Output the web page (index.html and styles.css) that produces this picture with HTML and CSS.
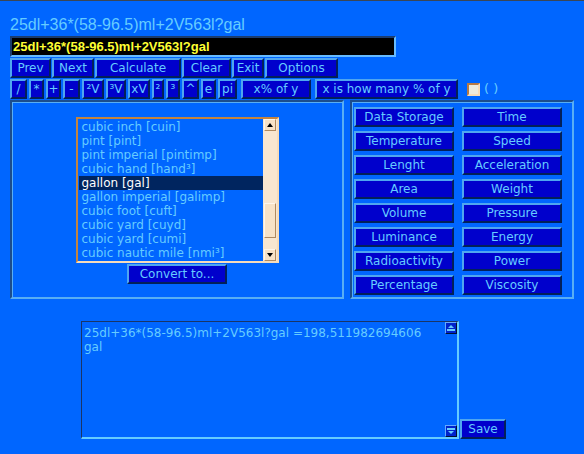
FILE: index.html
```html
<!DOCTYPE html>
<html lang="en">
<head>
  <meta charset="UTF-8">
  <title>Unit Calculator</title>
  <link rel="stylesheet" href="styles.css">
</head>
<body>
  <div class="app">
    <h1 class="title">25dl+36*(58-96.5)ml+2V563l?gal</h1>
    <input class="expr" type="text" value="25dl+36*(58-96.5)ml+2V563l?gal">

    <!-- main actions -->
    <div class="row row-main">
      <button class="btn b-prev">Prev</button>
      <button class="btn b-next">Next</button>
      <button class="btn b-calc">Calculate</button>
      <button class="btn b-clear">Clear</button>
      <button class="btn b-exit">Exit</button>
      <button class="btn b-options">Options</button>
    </div>

    <!-- operators -->
    <div class="row row-ops">
      <button class="btn k-div">/</button>
      <button class="btn k-mul">*</button>
      <button class="btn k-add">+</button>
      <button class="btn k-sub">-</button>
      <button class="btn k-sqrt">²V</button>
      <button class="btn k-cbrt">³V</button>
      <button class="btn k-xrt">xV</button>
      <button class="btn k-sq">²</button>
      <button class="btn k-cube">³</button>
      <button class="btn k-pow">^</button>
      <button class="btn k-e">e</button>
      <button class="btn k-pi">pi</button>
      <button class="btn k-pct">x% of y</button>
      <button class="btn k-howmany">x is how many % of y</button>
      <input class="check" type="checkbox">
      <span class="parens">( )</span>
    </div>

    <div class="panels">
      <!-- unit list -->
      <div class="panel panel-units">
        <div class="listbox">
          <ul class="items">
            <li>cubic inch [cuin]</li>
            <li>pint [pint]</li>
            <li>pint imperial [pintimp]</li>
            <li>cubic hand [hand³]</li>
            <li class="selected">gallon [gal]</li>
            <li>gallon imperial [galimp]</li>
            <li>cubic foot [cuft]</li>
            <li>cubic yard [cuyd]</li>
            <li>cubic yard [cumi]</li>
            <li>cubic nautic mile [nmi³]</li>
          </ul>
          <div class="scrollbar">
            <span class="sb-btn"><span class="tri-up"></span></span>
            <div class="sb-track"><span class="sb-thumb"></span></div>
            <span class="sb-btn"><span class="tri-down"></span></span>
          </div>
        </div>
        <button class="btn b-convert">Convert to...</button>
      </div>

      <!-- categories -->
      <div class="panel panel-cats">
        <button class="btn cat">Data Storage</button>
        <button class="btn cat">Time</button>
        <button class="btn cat">Temperature</button>
        <button class="btn cat">Speed</button>
        <button class="btn cat">Lenght</button>
        <button class="btn cat">Acceleration</button>
        <button class="btn cat">Area</button>
        <button class="btn cat">Weight</button>
        <button class="btn cat">Volume</button>
        <button class="btn cat">Pressure</button>
        <button class="btn cat">Luminance</button>
        <button class="btn cat">Energy</button>
        <button class="btn cat">Radioactivity</button>
        <button class="btn cat">Power</button>
        <button class="btn cat">Percentage</button>
        <button class="btn cat">Viscosity</button>
      </div>
    </div>

    <!-- result -->
    <div class="result-row">
      <div class="result">
        <div class="result-text">25dl+36*(58-96.5)ml+2V563l?gal =198,511982694606<br>gal</div>
        <div class="result-scroll">
          <span class="rs-btn">
            <svg width="8" height="6" viewBox="0 0 8 6"><path d="M1 3 L4 0 L7 3 Z" fill="#66ccff"/><rect x="0" y="4" width="8" height="2" fill="#66ccff"/></svg>
          </span>
          <span class="rs-btn">
            <svg width="8" height="6" viewBox="0 0 8 6"><rect x="0" y="0" width="8" height="2" fill="#66ccff"/><path d="M1 3 L4 6 L7 3 Z" fill="#66ccff"/></svg>
          </span>
        </div>
      </div>
      <button class="btn b-save">Save</button>
    </div>
  </div>
</body>
</html>
```

FILE: styles.css
```css
body {
  margin: 0;
  padding: 0;
  background-color: #0066ff;
  border-top: 1px solid #3a4656;
  font-family: "DejaVu Sans", Verdana, sans-serif;
  font-size: 12px;
  color: #66ccff;
}
.app {
  padding: 0 10px;
}
.title {
  margin: 15px 0 2px;
  height: 18px;
  font-family: "Liberation Sans", Arial, sans-serif;
  font-size: 16px;
  font-weight: normal;
  line-height: 18px;
  color: #66ccff;
}
.expr {
  display: block;
  box-sizing: border-box;
  width: 386px;
  height: 21px;
  margin: 0;
  padding: 0 0 0 1px;
  background: #000;
  border: 2px solid;
  border-color: #1b3c6e #66bbff #66bbff #1b3c6e;
  color: #ffff33;
  font-family: "Liberation Sans", Arial, sans-serif;
  font-size: 13px;
  font-weight: bold;
  outline: none;
}

/* buttons */
.btn {
  box-sizing: border-box;
  height: 20px;
  margin: 0;
  padding: 0;
  background: #0000cc;
  border: 2px solid;
  border-color: #4fa6f0 #02205a #02205a #4fa6f0;
  color: #66ccff;
  font-family: "DejaVu Sans", Verdana, sans-serif;
  font-size: 12px;
  line-height: 14px;
  text-align: center;
  white-space: nowrap;
  cursor: pointer;
}
.row {
  display: flex;
  align-items: center;
  gap: 1px;
  margin-top: 1px;
}
.b-prev { width: 41px; }
.b-next { width: 42px; }
.b-calc { width: 86px; }
.b-clear { width: 49px; }
.b-exit { width: 32px; }
.b-options { width: 73px; }

.row-ops {
  gap: 2px;
}
.k-div { width: 17px; }
.k-mul { width: 15px; }
.k-add { width: 15px; }
.k-sub { width: 17px; }
.k-sqrt { width: 22px; }
.k-cbrt { width: 20px; }
.k-xrt { width: 22px; }
.k-sq { width: 12px; }
.k-cube { width: 14px; }
.k-pow { width: 17px; }
.k-e { width: 15px; }
.k-pi { width: 19px; }
.k-pct { width: 70px; margin-left: 2px; }
.k-howmany { width: 143px; margin-left: 2px; }
.check {
  appearance: none;
  box-sizing: border-box;
  width: 13px;
  height: 13px;
  margin: 0 0 0 7px;
  background: #eeebdd;
  border: 2px solid;
  border-color: #b87a44 #f8dcb8 #f8dcb8 #b87a44;
}
.parens {
  margin-left: 2px;
  font-size: 13px;
  line-height: 14px;
}

/* panels */
.panels {
  display: flex;
  gap: 6px;
  margin-top: 1px;
}
.panel {
  box-sizing: border-box;
  height: 199px;
  border: 2px solid;
  border-color: #1c4d8c #58aef4 #58aef4 #1c4d8c;
  box-shadow: inset 1px 1px 0 #58aef4;
}
.panel-units {
  width: 334px;
  display: flex;
  flex-direction: column;
  align-items: center;
  padding-top: 15px;
}
.listbox {
  box-sizing: border-box;
  display: flex;
  width: 203px;
  height: 146px;
  border: 2px solid;
  border-color: #c4843f #f6dcbb #f6dcbb #c4843f;
}
.items {
  flex: 1;
  margin: 0;
  padding: 1px 0 0 1px;
  list-style: none;
  overflow: hidden;
}
.items li {
  height: 14px;
  padding-left: 3px;
  line-height: 14px;
  white-space: nowrap;
}
.items li.selected {
  background: #00255f;
  color: #fff;
}
.scrollbar {
  display: flex;
  flex-direction: column;
  width: 14px;
  background: #f8e6d0;
}
.sb-btn,
.sb-thumb {
  box-sizing: border-box;
  display: flex;
  align-items: center;
  justify-content: center;
  width: 12px;
  height: 12px;
  margin-left: 1px;
  background: #f8e2c6;
  border: 1px solid;
  border-color: #fff6ea #b08a60 #b08a60 #fff6ea;
}
.sb-track {
  flex: 1;
}
.sb-thumb {
  height: 35px;
  margin-top: 72px;
}
.tri-up,
.tri-down {
  width: 0;
  height: 0;
  border-left: 3px solid transparent;
  border-right: 3px solid transparent;
}
.tri-up { border-bottom: 4px solid #000; }
.tri-down { border-top: 4px solid #000; }
.b-convert {
  width: 100px;
  margin-top: 1px;
}

.panel-cats {
  width: 224px;
  display: grid;
  grid-template-columns: 100px 100px;
  grid-auto-rows: 20px;
  gap: 4px 8px;
  align-content: start;
  padding: 5px 0 0 2px;
}

/* result */
.result-row {
  display: flex;
  align-items: flex-end;
  margin: 22px 0 0 71px;
}
.result {
  box-sizing: border-box;
  display: flex;
  width: 378px;
  height: 118px;
  border-style: solid;
  border-width: 1px 2px 2px 1px;
  border-color: #1a3566 #66ccff #66ccff #1a3566;
}
.result-text {
  flex: 1;
  padding: 4px 0 0 2px;
  line-height: 14px;
}
.result-scroll {
  display: flex;
  flex-direction: column;
  justify-content: space-between;
}
.rs-btn {
  box-sizing: border-box;
  display: flex;
  align-items: center;
  justify-content: center;
  width: 12px;
  height: 12px;
  background: #0022cc;
  border: 1px solid;
  border-color: #66aaff #001133 #001133 #66aaff;
}
.b-save {
  width: 46px;
  margin-left: 1px;
}
```
